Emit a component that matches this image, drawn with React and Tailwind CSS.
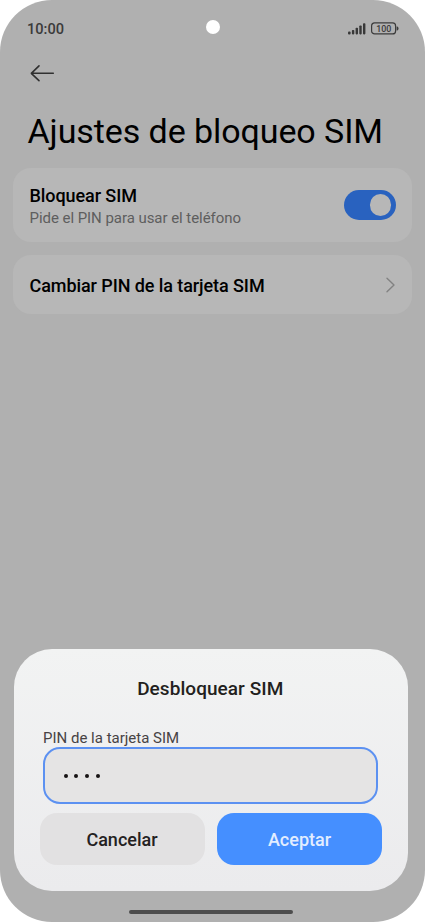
function SignalIcon() {
  return (
    <svg className="block h-[12px] w-[18px]" viewBox="0 0 18 12" fill="#383838">
      <rect x="0" y="8.6" width="2.6" height="2.8" rx="1" />
      <rect x="3.9" y="7" width="2.4" height="4.4" rx="0.8" />
      <rect x="7.6" y="4.8" width="2.4" height="6.6" rx="0.8" />
      <rect x="11.3" y="2.5" width="2.4" height="8.9" rx="0.8" />
      <rect x="15" y="0.2" width="2.4" height="11.2" rx="0.8" />
    </svg>
  );
}

function Battery() {
  return (
    <svg className="block h-[13px] w-[28px]" viewBox="0 0 28 13">
      <rect x="0.6" y="0.9" width="24" height="11" rx="3" fill="none" stroke="#3b3b3b" strokeWidth="1.2" />
      <path d="M25.6 4.4h0.5a1.4 2 0 0 1 0 4h-0.5z" fill="#3b3b3b" />
      <text x="12.8" y="9.7" textAnchor="middle" className="text-[9.3px] font-medium" fill="#3b3b3b" textLength="15.2" lengthAdjust="spacingAndGlyphs">
        100
      </text>
    </svg>
  );
}

function StatusBar() {
  return (
    <div className="flex h-[56px] items-start justify-between pr-[26px] pl-[27px]">
      <span className="mt-[19px] w-[151px] text-[14.6px] leading-[20px] font-medium text-[#3b3b3b]">10:00</span>
      <span className="mt-[20px] mr-[27px] h-[14px] w-[14px] rounded-full bg-white" />
      <div className="mt-[22px] flex w-[124px] items-center justify-end gap-[5px]">
        <SignalIcon />
        <Battery />
      </div>
    </div>
  );
}

export default function App() {
  return (
    <div className="h-[922px] w-[425px] overflow-hidden bg-white font-['Roboto',sans-serif]">
      <div className="flex h-full flex-col overflow-hidden rounded-[52px] bg-[#b0b0b0]">
        <StatusBar />
        <button className="ml-[30px] h-[34px] w-[26px]" aria-label="Atrás">
          <svg className="block h-[34px] w-[26px]" viewBox="0 0 26 34" fill="none" stroke="#303030" strokeWidth="1.6" strokeLinecap="round" strokeLinejoin="round">
            <path d="M23.3 17.3H1.3M9 9.9L1.3 17.3L9 24.7" />
          </svg>
        </button>
        <h1 className="mt-[19px] ml-[27.5px] h-[59px] text-[34px] leading-[44px] font-normal tracking-[-0.08px] whitespace-nowrap text-black">
          Ajustes de bloqueo SIM
        </h1>

        <div className="mr-[13px] ml-[12.5px] flex h-[74px] items-center justify-between rounded-[18px] bg-[#b7b7b7] pr-[16.5px] pl-[17px]">
          <div className="pt-[4px]">
            <div className="text-[18px] leading-[22px] font-medium tracking-[-0.08px] text-black">Bloquear SIM</div>
            <div className="text-[15px] leading-[22px] tracking-[-0.05px] text-[#5e5e5e]">Pide el PIN para usar el teléfono</div>
          </div>
          <div className="flex h-[30px] w-[52px] items-center justify-end rounded-full bg-[#2962bf] pr-[4.5px]">
            <div className="h-[21.5px] w-[21.5px] rounded-full bg-[#b7b7b7]" />
          </div>
        </div>

        <div className="mt-[13px] mr-[13px] ml-[12.5px] flex h-[59px] items-center justify-between rounded-[18px] bg-[#b7b7b7] pr-[17px] pl-[17px]">
          <div className="pt-[2px] text-[18px] leading-[23px] font-medium tracking-[-0.08px] text-black">Cambiar PIN de la tarjeta SIM</div>
          <svg className="block h-[16px] w-[9px]" viewBox="0 0 9 16" fill="none" stroke="#828282" strokeWidth="1.4" strokeLinecap="round" strokeLinejoin="round">
            <path d="M1 1.3L8 8L1 14.7" />
          </svg>
        </div>

        <section className="mt-auto mr-[17.5px] ml-[13.5px] h-[242px] rounded-[38px] bg-gradient-to-b from-[#f2f3f3] to-[#ebebed] pt-[28px] pr-[25.5px] pl-[26px]">
          <h2 className="pr-[1px] text-center text-[19px] leading-[24px] font-medium tracking-[0.06px] text-[#231f20]">Desbloquear SIM</h2>
          <div className="mt-[27px] ml-[3.5px] h-[19px] text-[15px] leading-[20px] text-[#474344]">PIN de la tarjeta SIM</div>
          <div className="mr-[4px] ml-[3.5px] flex h-[57px] items-center gap-[6.8px] rounded-[17px] border-2 border-[#5c91f1] bg-[#e5e4e4] pl-[18.5px]">
            <span className="h-[4px] w-[4px] rounded-full bg-[#171314]" />
            <span className="h-[4px] w-[4px] rounded-full bg-[#171314]" />
            <span className="h-[4px] w-[4px] rounded-full bg-[#171314]" />
            <span className="h-[4px] w-[4px] rounded-full bg-[#171314]" />
          </div>
          <div className="mt-[9px] flex gap-[12.5px]">
            <button className="h-[52px] flex-1 rounded-[17px] bg-[#e2e1e2] pt-px text-[18px] leading-[24px] font-medium text-[#242122]">Cancelar</button>
            <button className="h-[52px] flex-1 rounded-[17px] bg-[#458fff] pt-px text-[18px] leading-[24px] font-medium text-[#e2edff]">Aceptar</button>
          </div>
        </section>
        <div className="mt-[19px] mb-[8px] ml-[129px] h-[4px] w-[164px] rounded-full bg-[#4d4d4d]" />
      </div>
    </div>
  );
}
